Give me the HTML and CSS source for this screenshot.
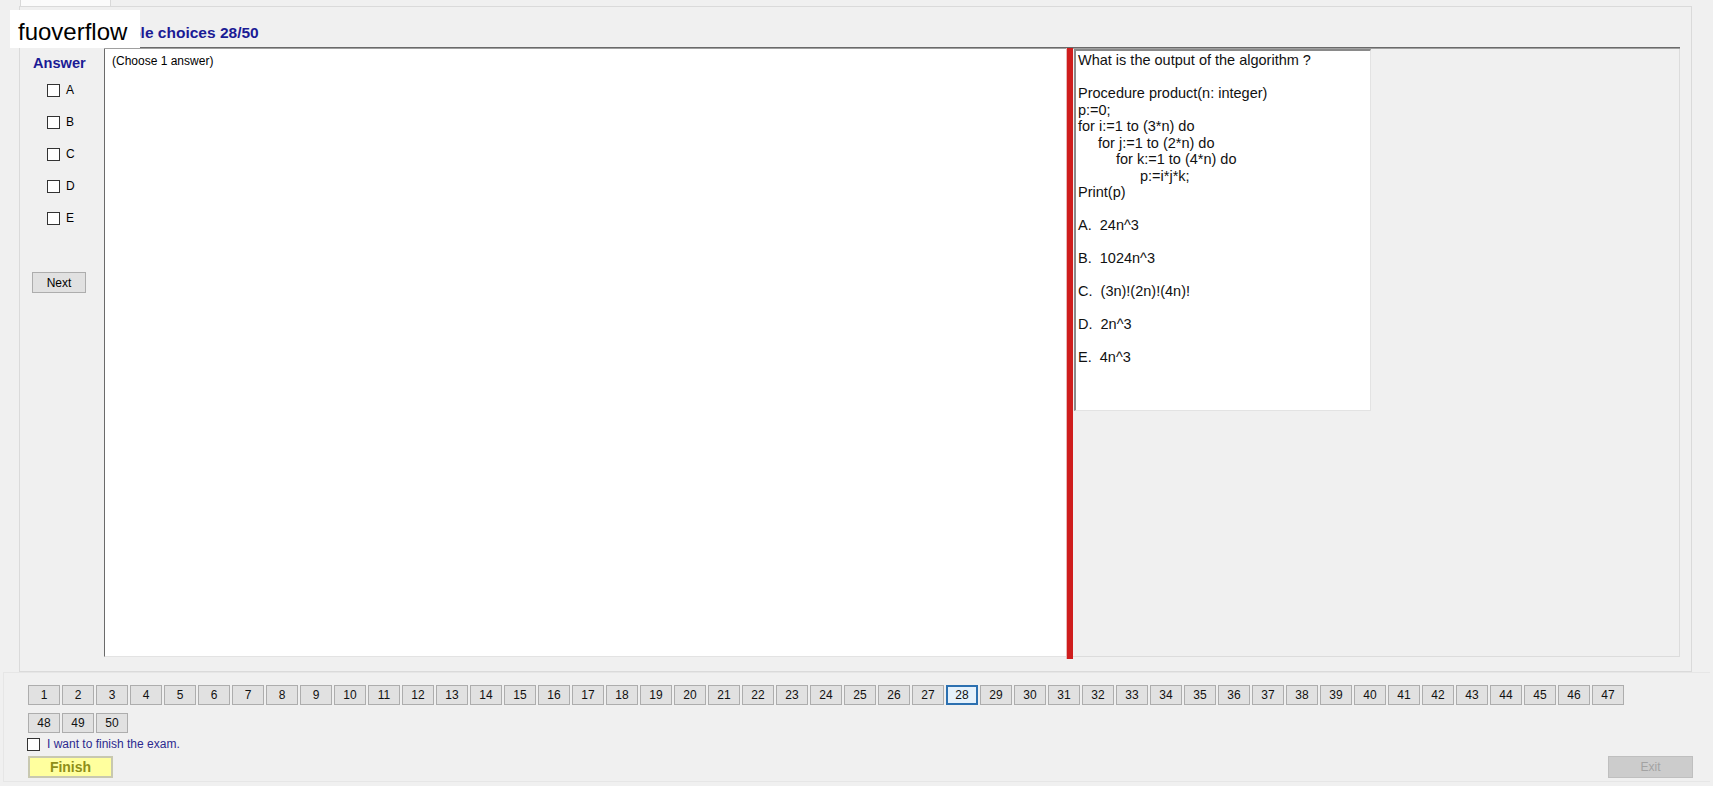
FILE: index.html
```html
<!DOCTYPE html>
<html>
<head>
	<title>Exam</title>
	<meta charset="utf-8">
	<link rel="stylesheet" href="styles.css">
</head>
<body>
	<div class="window">
		<div class="tabstrip"><div class="tab"></div></div>

		<div class="page">
			<div class="title">Multiple choices 28/50</div>
			<div class="content">
				<div class="answers">
					<div class="answer-head">Answer</div>
					<div class="opt"><span class="box"></span>A</div>
					<div class="opt"><span class="box"></span>B</div>
					<div class="opt"><span class="box"></span>C</div>
					<div class="opt"><span class="box"></span>D</div>
					<div class="opt"><span class="box"></span>E</div>
					<button class="btn next">Next</button>
				</div>
				<div class="split">
					<div class="answer-area">(Choose 1 answer)</div>
					<div class="splitter"></div>
					<div class="question-side">
						<div class="question">
							<div class="line">What is the output of the algorithm ?</div>
							<div class="line"></div>
							<div class="line">Procedure product(n: integer)</div>
							<div class="line">p:=0;</div>
							<div class="line">for i:=1 to (3*n) do</div>
							<div class="line ind1">for j:=1 to (2*n) do</div>
							<div class="line ind2">for k:=1 to (4*n) do</div>
							<div class="line ind3">p:=i*j*k;</div>
							<div class="line">Print(p)</div>
							<div class="line"></div>
							<div class="line">A.  24n^3</div>
							<div class="line"></div>
							<div class="line">B.  1024n^3</div>
							<div class="line"></div>
							<div class="line">C.  (3n)!(2n)!(4n)!</div>
							<div class="line"></div>
							<div class="line">D.  2n^3</div>
							<div class="line"></div>
							<div class="line">E.  4n^3</div>
						</div>
					</div>
				</div>
			</div>
		</div>

		<div class="bottom">
			<div class="numbers">
				<button class="num">1</button><button class="num">2</button><button class="num">3</button>
				<button class="num">4</button><button class="num">5</button><button class="num">6</button>
				<button class="num">7</button><button class="num">8</button><button class="num">9</button>
				<button class="num">10</button><button class="num">11</button><button class="num">12</button>
				<button class="num">13</button><button class="num">14</button><button class="num">15</button>
				<button class="num">16</button><button class="num">17</button><button class="num">18</button>
				<button class="num">19</button><button class="num">20</button><button class="num">21</button>
				<button class="num">22</button><button class="num">23</button><button class="num">24</button>
				<button class="num">25</button><button class="num">26</button><button class="num">27</button>
				<button class="num current">28</button><button class="num">29</button><button class="num">30</button>
				<button class="num">31</button><button class="num">32</button><button class="num">33</button>
				<button class="num">34</button><button class="num">35</button><button class="num">36</button>
				<button class="num">37</button><button class="num">38</button><button class="num">39</button>
				<button class="num">40</button><button class="num">41</button><button class="num">42</button>
				<button class="num">43</button><button class="num">44</button><button class="num">45</button>
				<button class="num">46</button><button class="num">47</button><button class="num">48</button>
				<button class="num">49</button><button class="num">50</button>
			</div>
			<div class="finish-check"><span class="box"></span>I want to finish the exam.</div>
			<div class="actions">
				<button class="finish">Finish</button>
				<button class="exit">Exit</button>
			</div>
		</div>

		<div class="watermark">fuoverflow</div>
	</div>
</body>
</html>
```

FILE: styles.css
```css
body {
	margin: 0;
	background: #f0f0f0;
	font-family: "Liberation Sans", Arial, sans-serif;
	font-size: 12px;
	color: #000;
}
.window {
	position: relative;
	width: 1713px;
	height: 786px;
	overflow: hidden;
}
.tabstrip {
	height: 6px;
}
.tab {
	margin-left: 20px;
	width: 89px;
	height: 6px;
	background: #fbfbfb;
	border-left: 1px solid #d9d9d9;
	border-right: 1px solid #d9d9d9;
}
.page {
	box-sizing: border-box;
	margin-left: 19px;
	width: 1673px;
	height: 666px;
	border: 1px solid #dadada;
	padding-right: 11px;
	display: flex;
	flex-direction: column;
}
.title {
	height: 40px;
	box-sizing: border-box;
	padding: 17px 0 0 75px;
	line-height: 18px;
	font-size: 15.5px;
	font-weight: bold;
	color: #1b1b95;
	white-space: nowrap;
}
.content {
	display: flex;
	height: 610px;
}
.answers {
	width: 84px;
	flex: none;
}
.answer-head {
	margin-top: 8px;
	padding-left: 13px;
	line-height: 17px;
	font-size: 14.6px;
	font-weight: bold;
	color: #1b1b95;
}
.opt {
	display: flex;
	align-items: center;
	height: 13px;
	margin-top: 19px;
	padding-left: 27px;
	line-height: 13px;
}
.answer-head + .opt {
	margin-top: 12px;
}
.box {
	box-sizing: border-box;
	width: 13px;
	height: 13px;
	border: 1px solid #333;
	background: #fff;
	margin-right: 6px;
	flex: none;
}
.btn {
	font-family: inherit;
	font-size: 12px;
	background: #e1e1e1;
	border: 1px solid #adadad;
	padding: 0;
	color: #000;
}
.next {
	display: block;
	margin: 47px 0 0 12px;
	width: 54px;
	height: 21px;
}
.split {
	flex: 1;
	display: flex;
	border-top: 1px solid #6a6a6a;
	box-shadow: inset 0 1px 0 #a0a0a0;
}
.answer-area {
	box-sizing: border-box;
	width: 962px;
	margin-top: 1px;
	background: #fff;
	border-left: 1px solid #6a6a6a;
	border-bottom: 1px solid #e3e3e3;
	padding: 5px 7px;
	line-height: 14px;
}
.splitter {
	width: 7px;
	flex: none;
	margin-bottom: -2px;
	background: #cf1d1d;
	border-left: 1px solid #e8b8b8;
	box-sizing: border-box;
}
.question-side {
	flex: 1;
	margin-top: 1px;
	border-right: 1px solid #dcdcdc;
	border-bottom: 1px solid #dcdcdc;
}
.question {
	box-sizing: border-box;
	margin-left: 1px;
	width: 297px;
	height: 362px;
	background: #fff;
	border-top: 2px solid #8a8a8a;
	border-left: 2px solid #8a8a8a;
	border-right: 1px solid #e3e3e3;
	border-bottom: 1px solid #e3e3e3;
	padding: 1px 2px 0;
	font-size: 14.5px;
	line-height: 16.5px;
	color: #111;
}
.line {
	height: 16.5px;
	white-space: pre;
}
.ind1 { padding-left: 20px; }
.ind2 { padding-left: 38px; }
.ind3 { padding-left: 62px; }
.bottom {
	height: 110px;
	box-sizing: border-box;
	margin: 0 3px;
	border-top: 1px solid #e6e6e6;
	border-left: 1px solid #e6e6e6;
	border-bottom: 1px solid #e6e6e6;
	padding-top: 12px;
}
.numbers {
	display: flex;
	flex-wrap: wrap;
	column-gap: 2px;
	row-gap: 8px;
	width: 1600px;
	margin-left: 24px;
}
.num {
	box-sizing: border-box;
	width: 32px;
	height: 20px;
	padding: 0;
	font-family: inherit;
	font-size: 12px;
	color: #111;
	background: #e1e1e1;
	border: 1px solid #adadad;
}
.num.current {
	border: 2px solid #2c70b0;
	background: #e5f1fb;
}
.finish-check {
	display: flex;
	align-items: center;
	height: 13px;
	margin: 5px 0 0 23px;
	color: #2d2a8f;
	line-height: 13px;
}
.finish-check .box {
	margin-right: 7px;
}
.actions {
	display: flex;
	justify-content: space-between;
	margin: 5px 17px 0 24px;
}
.finish {
	box-sizing: border-box;
	width: 85px;
	height: 22px;
	padding: 0;
	font-family: inherit;
	font-size: 14px;
	font-weight: bold;
	color: #8e8e18;
	background: #ffff9e;
	border: 2px solid #c8c8b0;
}
.exit {
	box-sizing: border-box;
	width: 85px;
	height: 22px;
	padding: 0;
	font-family: inherit;
	font-size: 12px;
	color: #a3a3a3;
	background: #cccccc;
	border: 1px solid #bfbfbf;
}
.watermark {
	position: absolute;
	left: 10px;
	top: 10px;
	width: 130px;
	height: 38px;
	box-sizing: border-box;
	background: #fff;
	padding: 5px 0 0 8px;
	font-size: 24px;
	line-height: 33px;
	color: #000;
}
```
